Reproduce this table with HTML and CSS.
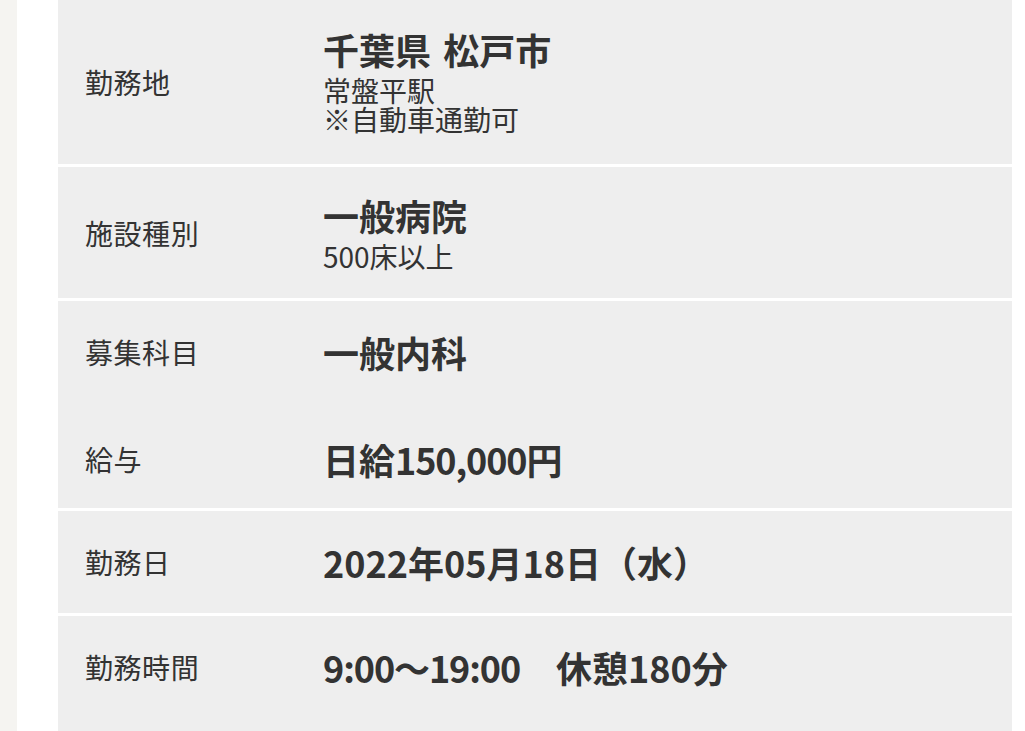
FILE: index.html
```html
<!DOCTYPE html>
<html lang="ja">
<head>
<meta charset="utf-8">
<title>求人詳細</title>
<link rel="stylesheet" href="styles.css">
</head>
<body>
<div class="page">
  <aside class="side"></aside>
  <main class="main">
    <dl class="spec">
      <div class="row row-first">
        <dt class="label">勤務地</dt>
        <dd class="value">
          <p class="value-main">千葉県 松戸市</p>
          <p class="value-sub">常盤平駅</p>
          <p class="value-sub">※自動車通勤可</p>
        </dd>
      </div>
      <div class="row row-stacked">
        <dt class="label">施設種別</dt>
        <dd class="value">
          <p class="value-main">一般病院</p>
          <p class="value-sub">500床以上</p>
        </dd>
      </div>
      <div class="row row-joined">
        <dt class="label">募集科目</dt>
        <dd class="value">
          <p class="value-main">一般内科</p>
        </dd>
      </div>
      <div class="row row-after-joined">
        <dt class="label">給与</dt>
        <dd class="value">
          <p class="value-main">日給<span class="num">150,000</span>円</p>
        </dd>
      </div>
      <div class="row">
        <dt class="label">勤務日</dt>
        <dd class="value">
          <p class="value-main">2022年05月18日（水）</p>
        </dd>
      </div>
      <div class="row row-last">
        <dt class="label">勤務時間</dt>
        <dd class="value">
          <p class="value-main"><span class="num">9:00〜19:00</span>　休憩180分</p>
        </dd>
      </div>
    </dl>
  </main>
</div>
</body>
</html>
```

FILE: styles.css
```css
* {
  box-sizing: border-box;
}

html, body {
  margin: 0;
  padding: 0;
  background: #ffffff;
}

body {
  font-family: "Noto Sans CJK JP", "Noto Sans", sans-serif;
  color: #333333;
  overflow: hidden;
}

.page {
  display: flex;
  align-items: stretch;
  min-height: 731px;
}

.side {
  width: 17px;
  flex: none;
  background: #f5f4f1;
}

.main {
  flex: none;
  width: 995px;
  padding-left: 41px;
}

.spec {
  margin: 0;
  padding: 0;
}

.row {
  display: grid;
  grid-template-columns: 265px 1fr;
  align-items: center;
  background: #eeeeee;
  padding: 24px 0;
  border-bottom: 3px solid #ffffff;
}

.row-first {
  padding-top: 26px;
  padding-bottom: 26px;
}

.row-first .value {
  margin-top: -4px;
  margin-bottom: 4px;
}

.row-stacked .value {
  margin-top: -3px;
  margin-bottom: 3px;
}

.row-joined {
  border-bottom-color: #eeeeee;
  padding-bottom: 25px;
}

.row-after-joined {
  padding-top: 25px;
  padding-bottom: 22px;
}

.row-last {
  padding-bottom: 40px;
}

.label {
  margin: 0;
  padding-left: 27px;
  font-size: 28px;
  font-weight: 400;
  line-height: 40px;
  letter-spacing: 0.02em;
}

.value {
  margin: 0;
}

.value-main {
  margin: 0;
  font-size: 36px;
  font-weight: 700;
  line-height: 54px;
  word-spacing: 4px;
}

.num {
  letter-spacing: -1.1px;
}

.value-sub {
  margin: 0;
  font-size: 28px;
  font-weight: 400;
  line-height: 29px;
}
```
